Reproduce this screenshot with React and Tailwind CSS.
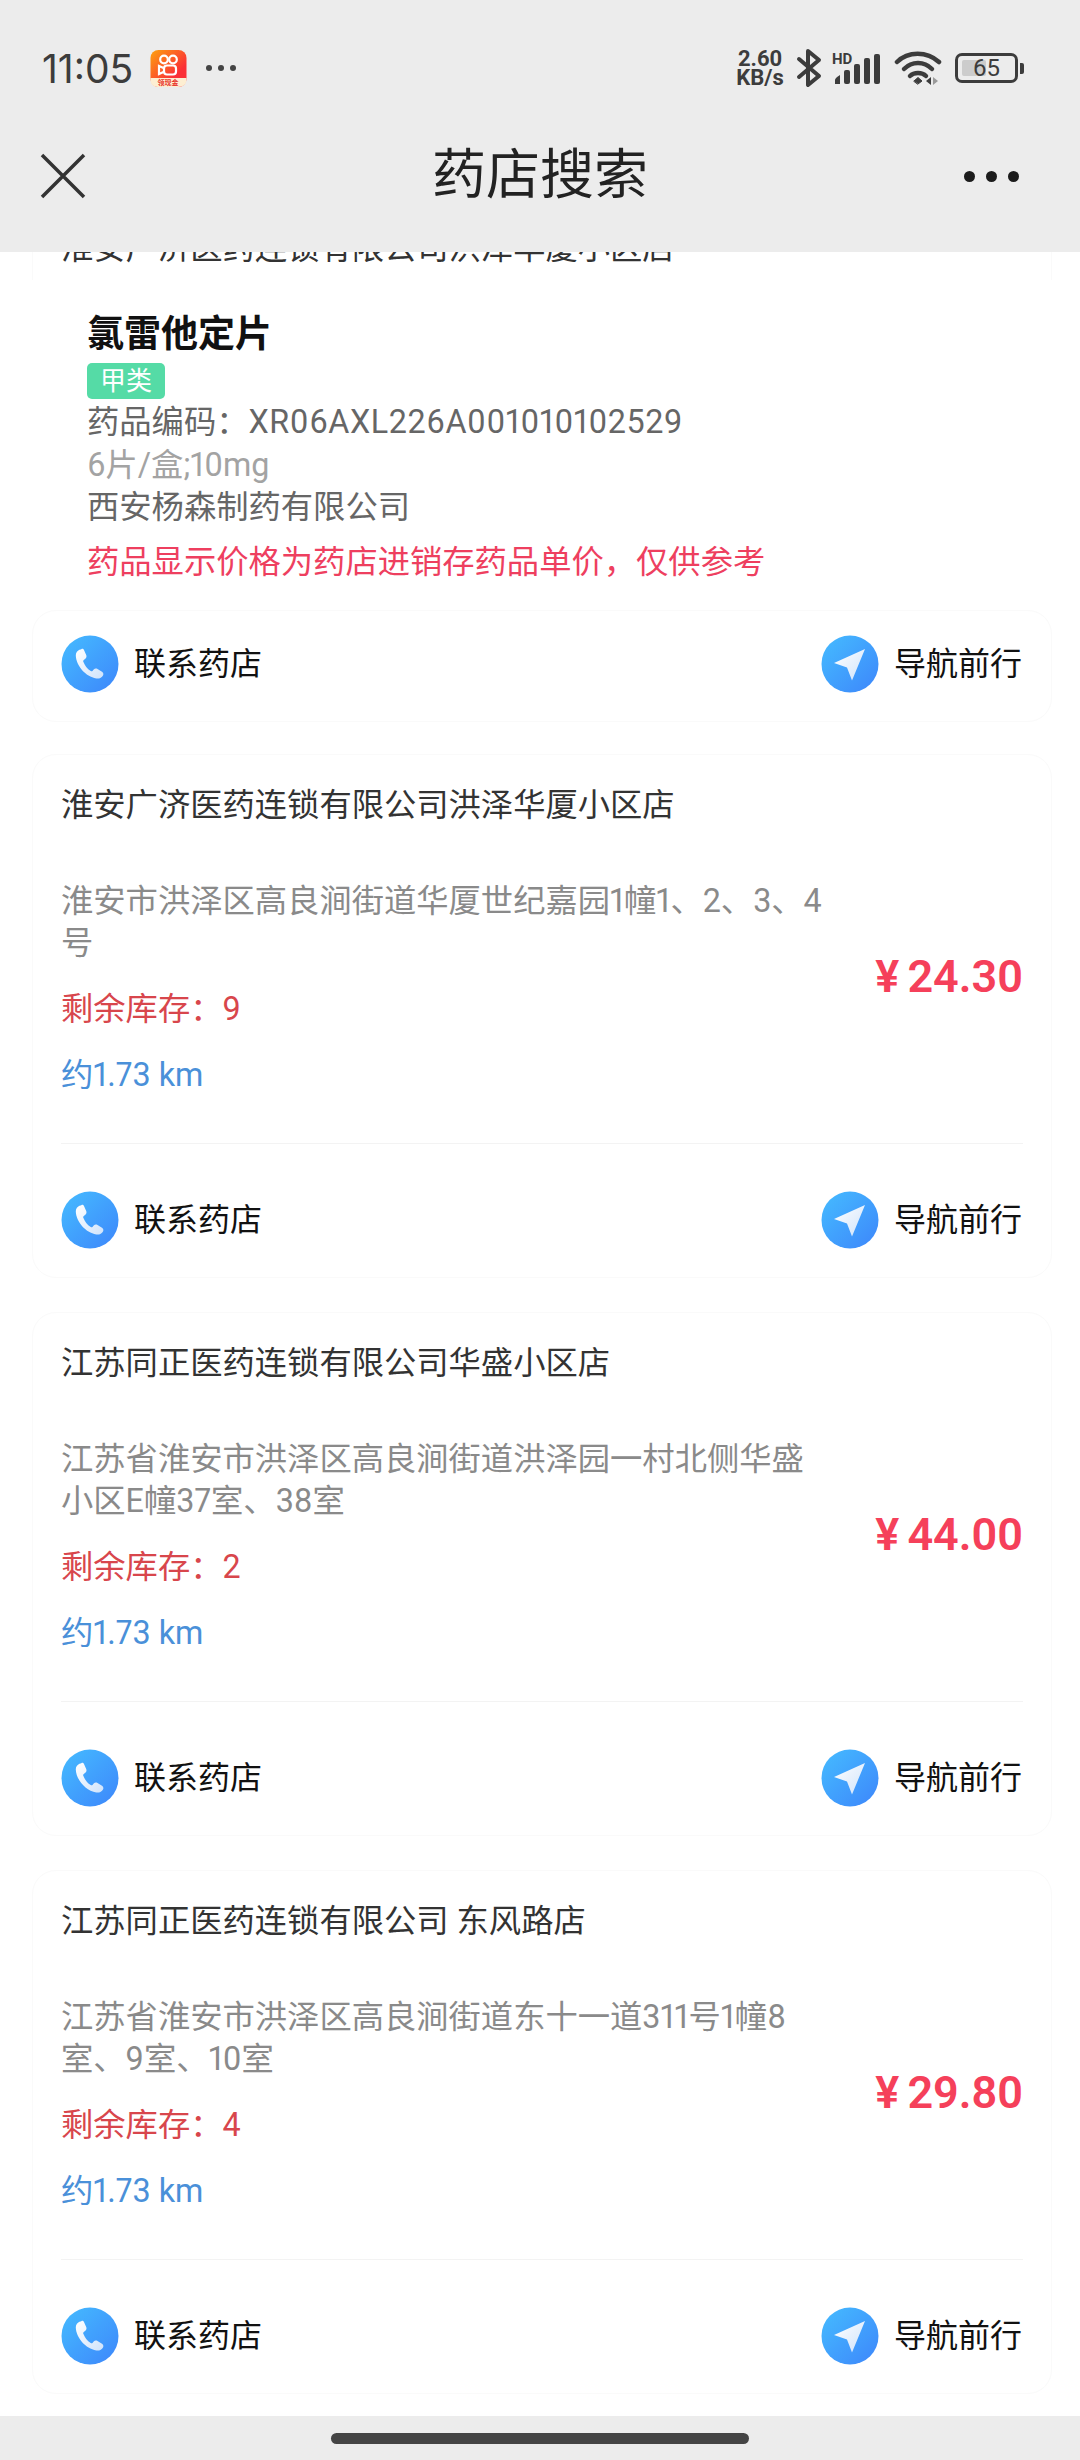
import { useId } from 'react';

const stores = [
  {
    name: '淮安广济医药连锁有限公司洪泽华厦小区店',
    address: ['淮安市洪泽区高良涧街道华厦世纪嘉园1幢1、2、3、4', '号'],
    stock: 9,
    price: '24.30',
  },
  {
    name: '江苏同正医药连锁有限公司华盛小区店',
    address: ['江苏省淮安市洪泽区高良涧街道洪泽园一村北侧华盛', '小区E幢37室、38室'],
    stock: 2,
    price: '44.00',
  },
  {
    name: '江苏同正医药连锁有限公司 东风路店',
    address: ['江苏省淮安市洪泽区高良涧街道东十一道311号1幢8', '室、9室、10室'],
    stock: 4,
    price: '29.80',
  },
];

const CircleIcon = ({ type }) => {
  const id = useId();
  return (
    <svg width="58" height="58" viewBox="0 0 58 58" className="shrink-0">
      <defs>
        <linearGradient id={id} x1="0" y1="0" x2="1" y2="1">
          <stop offset="0" stopColor="#45bcff" />
          <stop offset="1" stopColor="#3d86fb" />
        </linearGradient>
        <linearGradient id={`${id}w`} x1="0" y1="0" x2="1" y2="1">
          <stop offset="0" stopColor="#ffffff" />
          <stop offset="1" stopColor="#cfe3fb" />
        </linearGradient>
      </defs>
      <circle cx="29" cy="29" r="28.5" fill={`url(#${id})`} />
      {type === 'phone' ? (
        <path
          d="M19 14.500c-2.500 1-4.300 3.200-4.200 6 .4 10.500 9.800 21 20.500 23 2.800.5 5.500-.8 6.700-3 .8-1.600.2-3-1-3.800l-4.500-2.800c-1.300-.8-2.800-.6-3.800.6l-1.200 1.400c-.5.500-1.100.6-1.800.2-3.500-2.200-6-5.500-7.500-9.500-.2-.7 0-1.300.6-1.700l1.500-1.100c1.200-.9 1.500-2.300.9-3.700l-2.100-4.800c-.7-1.500-2.400-1.900-3.100-.8z"
          fill={`url(#${id}w)`}
        />
      ) : (
        <path d="M44 14 L13 28 L26 32.500 L31 45.500 Z" fill={`url(#${id}w)`} />
      )}
    </svg>
  );
};

const CardFooter = () => (
  <div className="flex items-center justify-between pl-[28px] pr-[29px]">
    <div className="flex items-center gap-[15px]">
      <CircleIcon type="phone" />
      <span className="text-[32px] leading-[42px] text-[#111]">联系药店</span>
    </div>
    <div className="flex items-center gap-[15px]">
      <CircleIcon type="nav" />
      <span className="text-[32px] leading-[42px] text-[#111]">导航前行</span>
    </div>
  </div>
);

const StoreCard = ({ store }) => (
  <div className="h-[524px] rounded-[24px] border border-[#fafafa] mb-[34px]">
    <div className="h-[389px] mx-[28px] border-b border-[#f3f3f3] flex items-center justify-between pt-[29px]">
      <div className="self-start text-[32.3px] leading-[42px] proportional-nums">
        <p className="text-[#333]">{store.name}</p>
        <div className="mt-[54px] text-[#8a8a8a]">
          {store.address.map((line) => (
            <p key={line}>{line}</p>
          ))}
        </div>
        <p className="mt-[24px] text-[#d8464c]">剩余库存：{store.stock}</p>
        <p className="mt-[24px] text-[#4a90d9]">约1.73 km</p>
      </div>
      <div className="text-[45px] leading-none font-semibold text-[#f5405a] flex items-center mb-[-26px]">
        <span className="mr-[8px]">¥</span>
        <span>{store.price}</span>
      </div>
    </div>
    <div className="pt-[47px]">
      <CardFooter />
    </div>
  </div>
);

const StatusIcons = () => (
  <div className="flex items-center">
    <div className="w-[48px] text-[22px] leading-[19px] font-bold text-[#3c3c3c] text-center">
      <p>2.60</p>
      <p>KB/s</p>
    </div>
    <svg width="26" height="40" viewBox="0 0 26 40" className="ml-[12px]" fill="none" stroke="#3c3c3c" strokeWidth="4" strokeLinejoin="round" strokeLinecap="round">
      <path d="M3 11 L23 28 L12 37 V3 L23 12 L3 29" />
    </svg>
    <svg width="50" height="34" viewBox="0 0 50 34" className="ml-[10px]" fill="#3c3c3c">
      <text x="0" y="13" fontSize="15" fontWeight="700" fontFamily="Roboto, sans-serif">HD</text>
      <path d="M3 33 v-4 q0-2 5-5 v9z" />
      <rect x="12" y="19" width="6" height="14" rx="2" />
      <rect x="22" y="13" width="6" height="20" rx="2" />
      <rect x="32" y="7" width="6" height="26" rx="2" />
      <rect x="42" y="3" width="6" height="30" rx="2" />
    </svg>
    <svg width="48" height="36" viewBox="0 0 48 36" className="ml-[12px]" fill="none" stroke="#3c3c3c" strokeWidth="4.500" strokeLinecap="round">
      <path d="M3 12 C14 1 33 1 45 12" />
      <path d="M10 19 C18 11 30 11 38 19" />
      <path d="M16 26 C20 22 28 22 32 26" />
      <path d="M20 31 L24 27.500 L28 31 L24 34z" fill="#3c3c3c" strokeWidth="1" />
      <path d="M37 27 L32 31 L37 35z" fill="#3c3c3c" stroke="none" />
      <path d="M39 27 L44 31 L39 35z" fill="#9a9a9a" stroke="none" />
    </svg>
    <div className="ml-[13px] flex items-center">
      <div className="relative w-[63px] h-[30px] rounded-[7px] border-[3px] border-[#3c3c3c] p-[4px]">
        <div className="h-full w-[24px] rounded-[2px] bg-[#cccccc]" />
        <span className="absolute inset-0 flex items-center justify-center text-[24px] leading-none text-[#3c3c3c]">65</span>
      </div>
      <div className="ml-[2px] w-[4px] h-[11px] rounded-r-[2px] bg-[#3c3c3c]" />
    </div>
  </div>
);

const AppBadge = () => (
  <svg width="37" height="37" viewBox="0 0 37 37" className="ml-[17px]">
    <defs>
      <linearGradient id="ksBg" x1="0" y1="0" x2="1" y2="1">
        <stop offset="0" stopColor="#fda20f" />
        <stop offset="0.7" stopColor="#fb2f36" />
      </linearGradient>
    </defs>
    <rect x="0.500" y="0" width="36" height="37" rx="8" fill="url(#ksBg)" />
    <path d="M0.500 28 H36.500 V29 Q36.500 37 28 37 H8 Q0.500 37 0.500 29z" fill="#fdeed2" />
    <g fill="none" stroke="#fff" strokeWidth="2.200">
      <circle cx="14" cy="9.500" r="3.800" />
      <circle cx="23" cy="9.500" r="3.800" />
      <rect x="14" y="15.500" width="12" height="9" rx="3" />
      <path d="M13.500 18 L9 16 V24 L13.500 22" />
    </g>
    <text x="18" y="35" fontSize="7" fontWeight="700" textAnchor="middle" fill="#e8352c" fontFamily="'Noto Sans CJK SC', sans-serif">领现金</text>
  </svg>
);

const App = () => {
  return (
    <div
      className="w-[1080px] h-[2460px] flex flex-col overflow-hidden bg-white"
      style={{ fontFamily: "Roboto, 'Noto Sans CJK SC', sans-serif" }}
    >
      {/* HEADER */}
      <header className="h-[252px] shrink-0 bg-[#ececec]">
        <div className="h-[136px] pl-[42px] pr-[56px] flex items-center justify-between">
          <div className="flex items-center">
            <span className="font-['Inter'] text-[39px] leading-none text-[#3c3c3c]">11:05</span>
            <AppBadge />
            <div className="ml-[19px] flex gap-[6px]">
              <span className="w-[6px] h-[6px] rounded-full bg-[#444]" />
              <span className="w-[6px] h-[6px] rounded-full bg-[#444]" />
              <span className="w-[6px] h-[6px] rounded-full bg-[#444]" />
            </div>
          </div>
          <StatusIcons />
        </div>
        <div className="relative h-[80px] flex items-center justify-between pl-[40px] pr-[61px]">
          <svg width="46" height="46" viewBox="0 0 46 46" fill="none" stroke="#333" strokeWidth="3.500">
            <path d="M2 2 L44 44 M44 2 L2 44" />
          </svg>
          <h1 className="absolute inset-x-0 text-center text-[54px] leading-[80px] text-[#222]">药店搜索</h1>
          <div className="flex gap-[11px]">
            <span className="w-[11px] h-[11px] rounded-full bg-[#1c1c1c]" />
            <span className="w-[11px] h-[11px] rounded-full bg-[#1c1c1c]" />
            <span className="w-[11px] h-[11px] rounded-full bg-[#1c1c1c]" />
          </div>
        </div>
      </header>

      {/* LIST */}
      <main className="flex-1 overflow-hidden pl-[32px] pr-[28px]">
        {/* first card, scrolled under the header */}
        <div className="mt-[-25px] h-[53px] border-x border-[#fafafa] pl-[28px]">
          <p className="text-[32.3px] leading-[42px] text-[#333]">淮安广济医药连锁有限公司洪泽华厦小区店</p>
        </div>
        <div className="h-[330px] pl-[55px] pt-[33px] text-[32.3px] leading-[42px] proportional-nums">
          <p className="text-[37px] leading-[44px] font-bold text-[#111]">氯雷他定片</p>
          <span className="mt-[6px] block w-[78px] h-[36px] rounded-[5px] bg-[#55dba6] text-center text-[26px] leading-[36px] text-white">
            甲类
          </span>
          <p className="mt-[2px] text-[#666]">
            药品编码：<span className="tracking-[0.6px]">XR06AXL226A001010102529</span>
          </p>
          <p className="mt-[1px] text-[#a3a3a3]">6片/盒;10mg</p>
          <p className="text-[#666]">西安杨森制药有限公司</p>
          <p className="mt-[13px] text-[#ee3f5f]">药品显示价格为药店进销存药品单价，仅供参考</p>
        </div>
        <div className="h-[112px] mb-[32px] rounded-[24px] border border-[#fafafa] pt-[24px]">
          <CardFooter />
        </div>

        {stores.map((store) => (
          <StoreCard key={store.name} store={store} />
        ))}
      </main>

      {/* HOME BAR */}
      <div className="h-[44px] shrink-0 bg-[#ececec] flex items-center justify-center pt-[1px]">
        <div className="w-[418px] h-[11px] rounded-full bg-[#444]" />
      </div>
    </div>
  );
};

export default App;
